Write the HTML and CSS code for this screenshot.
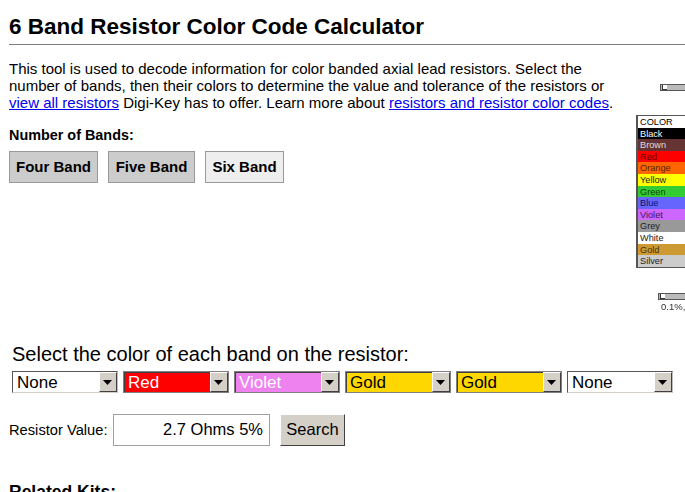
FILE: index.html
```html
<!DOCTYPE html>
<html lang="en">
<head>
<meta charset="utf-8">
<title>6 Band Resistor Color Code Calculator</title>
<link rel="stylesheet" href="styles.css">
</head>
<body>
<main class="page">
  <h1 class="title">6 Band Resistor Color Code Calculator</h1>
  <div class="diagram">
    <div class="lead lead-top"><span class="lead-mark"></span></div>
    <div class="chart">
      <div class="chip c-head">COLOR</div>
      <div class="chip c-black">Black</div>
      <div class="chip c-brown">Brown</div>
      <div class="chip c-red">Red</div>
      <div class="chip c-orange">Orange</div>
      <div class="chip c-yellow">Yellow</div>
      <div class="chip c-green">Green</div>
      <div class="chip c-blue">Blue</div>
      <div class="chip c-violet">Violet</div>
      <div class="chip c-grey">Grey</div>
      <div class="chip c-white">White</div>
      <div class="chip c-gold">Gold</div>
      <div class="chip c-silver">Silver</div>
    </div>
    <div class="lead lead-bottom"><span class="lead-mark"></span></div>
    <div class="tolerance">0.1%,</div>
  </div>
  <p class="intro">This tool is used to decode information for color banded axial lead resistors. Select the number of bands, then their colors to determine the value and tolerance of the resistors or <a href="#">view all resistors</a> Digi-Key has to offer. Learn more about <a href="#">resistors and resistor color codes</a>.</p>
  <div class="bands-label">Number of Bands:</div>
  <div class="bands">
    <button class="band-btn" type="button">Four Band</button>
    <button class="band-btn" type="button">Five Band</button>
    <button class="band-btn is-active" type="button">Six Band</button>
  </div>
  <section class="picker">
    <div class="picker-title">Select the color of each band on the resistor:</div>
    <div class="selects">
      <div class="sel"><span class="sel-value v-none">None</span><span class="sel-arrow"><svg width="9" height="5" viewBox="0 0 9 5"><path d="M0 0h9L4.500 5z"/></svg></span></div>
      <div class="sel dim"><span class="sel-value v-red">Red</span><span class="sel-arrow"><svg width="9" height="5" viewBox="0 0 9 5"><path d="M0 0h9L4.500 5z"/></svg></span></div>
      <div class="sel dim"><span class="sel-value v-violet">Violet</span><span class="sel-arrow"><svg width="9" height="5" viewBox="0 0 9 5"><path d="M0 0h9L4.500 5z"/></svg></span></div>
      <div class="sel dim"><span class="sel-value v-gold">Gold</span><span class="sel-arrow"><svg width="9" height="5" viewBox="0 0 9 5"><path d="M0 0h9L4.500 5z"/></svg></span></div>
      <div class="sel dim"><span class="sel-value v-gold">Gold</span><span class="sel-arrow"><svg width="9" height="5" viewBox="0 0 9 5"><path d="M0 0h9L4.500 5z"/></svg></span></div>
      <div class="sel"><span class="sel-value v-none">None</span><span class="sel-arrow"><svg width="9" height="5" viewBox="0 0 9 5"><path d="M0 0h9L4.500 5z"/></svg></span></div>
    </div>
  </section>
  <div class="value-row">
    <span class="value-label">Resistor Value:</span>
    <div class="value-box">2.7 Ohms 5%</div>
    <button class="search" type="button">Search</button>
  </div>
  <h2 class="kits">Related Kits:</h2>
</main>
</body>
</html>
```

FILE: styles.css
```css
html, body {
  margin: 0;
  height: 100%;
  overflow: hidden;
  background: #fff;
}
body {
  font-family: "Liberation Sans", Arial, sans-serif;
  color: #000;
}
.page {
  position: relative;
  height: 492px;
  padding: 0 0 0 9px;
  box-sizing: border-box;
  overflow: hidden;
}
.title {
  margin: 0;
  padding: 14px 0 4px;
  font-size: 22.500px;
  line-height: 26px;
  font-weight: bold;
  border-bottom: 1px solid #808080;
}
.intro {
  margin: 15px 0 0;
  width: 606px;
  font-size: 15px;
  line-height: 17px;
}
.intro a {
  color: #0000ee;
}
.bands-label {
  margin-top: 16px;
  font-size: 14.400px;
  line-height: 17px;
  font-weight: bold;
}
.bands {
  display: flex;
  gap: 10px;
  margin-top: 7px;
}
.band-btn {
  height: 32px;
  width: 89px;
  padding: 0 0 2px;
  border: 1px solid #999;
  background: #ccc;
  font: bold 15px "Liberation Sans", Arial, sans-serif;
  color: #000;
}
.band-btn + .band-btn {
  width: 87px;
}
.band-btn.is-active {
  background: #eee;
  width: 79px;
}
.picker {
  margin: 159px 0 0 3px;
}
.picker-title {
  font-size: 20px;
  line-height: 23px;
  padding-top: 1px;
}
.selects {
  display: flex;
  gap: 5.400px;
  margin-top: 5px;
}
.sel {
  display: flex;
  width: 105.600px;
  height: 22px;
  box-sizing: border-box;
  border: 1px solid;
  border-color: #555 #bbb #d4d0c8 #555;
  background: #fff;
}
.sel.dim {
  border-color: #808080;
  box-shadow: inset 1px 1px 0 #404040;
}
.sel-value {
  flex: 1;
  padding-left: 3px;
  font-size: 17px;
  line-height: 20px;
  margin: 1px 0 0 1px;
  min-width: 0;
}
.v-none { background: #fff; color: #000; }
.v-red { background: #f00; color: #fff; }
.v-violet { background: #ee82ee; color: #fff; }
.v-gold { background: #ffd700; color: #000; }
.sel-arrow {
  display: flex;
  align-items: center;
  justify-content: center;
  width: 18px;
  box-sizing: border-box;
  background: #d4d0c8;
  border: 1px solid;
  border-color: #fff #404040 #404040 #fff;
}
.sel-arrow path {
  fill: #000;
}
.value-row {
  display: flex;
  align-items: center;
  margin-top: 21px;
  height: 32px;
}
.value-label {
  width: 99px;
  margin-right: 5px;
  font-size: 14.700px;
  white-space: nowrap;
}
.value-box {
  width: 157px;
  height: 32px;
  box-sizing: border-box;
  padding-right: 6px;
  border: 1px solid #a0a0a0;
  font-size: 16.500px;
  line-height: 29px;
  text-align: right;
}
.search {
  width: 65px;
  height: 32px;
  margin-left: 10px;
  padding: 0 0 2px;
  background: #d4d0c8;
  border: 1px solid;
  border-color: #fff #404040 #404040 #fff;
  font: 16.500px "Liberation Sans", Arial, sans-serif;
  color: #000;
}
.kits {
  margin: 36px 0 0;
  font-size: 17.500px;
  line-height: 20px;
  font-weight: bold;
}
.diagram {
  position: absolute;
  left: 0;
  top: 0;
  width: 685px;
  height: 320px;
  pointer-events: none;
  filter: blur(0.3px);
}
.lead {
  position: absolute;
  height: 7px;
  right: 0;
  box-sizing: border-box;
  background: #bbb;
  border: 1px solid #555;
  border-right: 0;
}
.lead-top { left: 660px; top: 84px; }
.lead-bottom { left: 658px; top: 293px; }
.lead-mark {
  display: block;
  width: 4px;
  height: 4px;
  margin: 0 0 0 1px;
  background: #fff;
  border-left: 1px solid #333;
  border-bottom: 1px solid #333;
}
.tolerance {
  position: absolute;
  left: 661px;
  top: 301px;
  font-size: 9.500px;
  line-height: 11px;
  color: #333;
}
.chart {
  position: absolute;
  left: 636px;
  top: 115px;
  width: 60px;
  height: 153px;
  box-sizing: border-box;
  display: flex;
  flex-direction: column;
  border: 1px solid #555;
  border-left-width: 2px;
  overflow: hidden;
}
.chip {
  flex: 1 1 0;
  min-height: 0;
  padding-left: 2px;
  font-size: 9.200px;
  line-height: 12.400px;
}
.c-head { background: #fff; color: #000; }
.c-black { background: #000; color: #fff; }
.c-brown { background: #663333; color: #ddd; }
.c-red { background: #ff0000; color: #660000; }
.c-orange { background: #ff6600; color: #552200; }
.c-yellow { background: #ffff00; color: #222; }
.c-green { background: #33cc33; color: #114411; }
.c-blue { background: #6666ff; color: #111166; }
.c-violet { background: #cc66ff; color: #441166; }
.c-grey { background: #999; color: #222; }
.c-white { background: #fff; color: #222; }
.c-gold { background: #cc9933; color: #443311; }
.c-silver { background: #ccc; color: #222; }
```
